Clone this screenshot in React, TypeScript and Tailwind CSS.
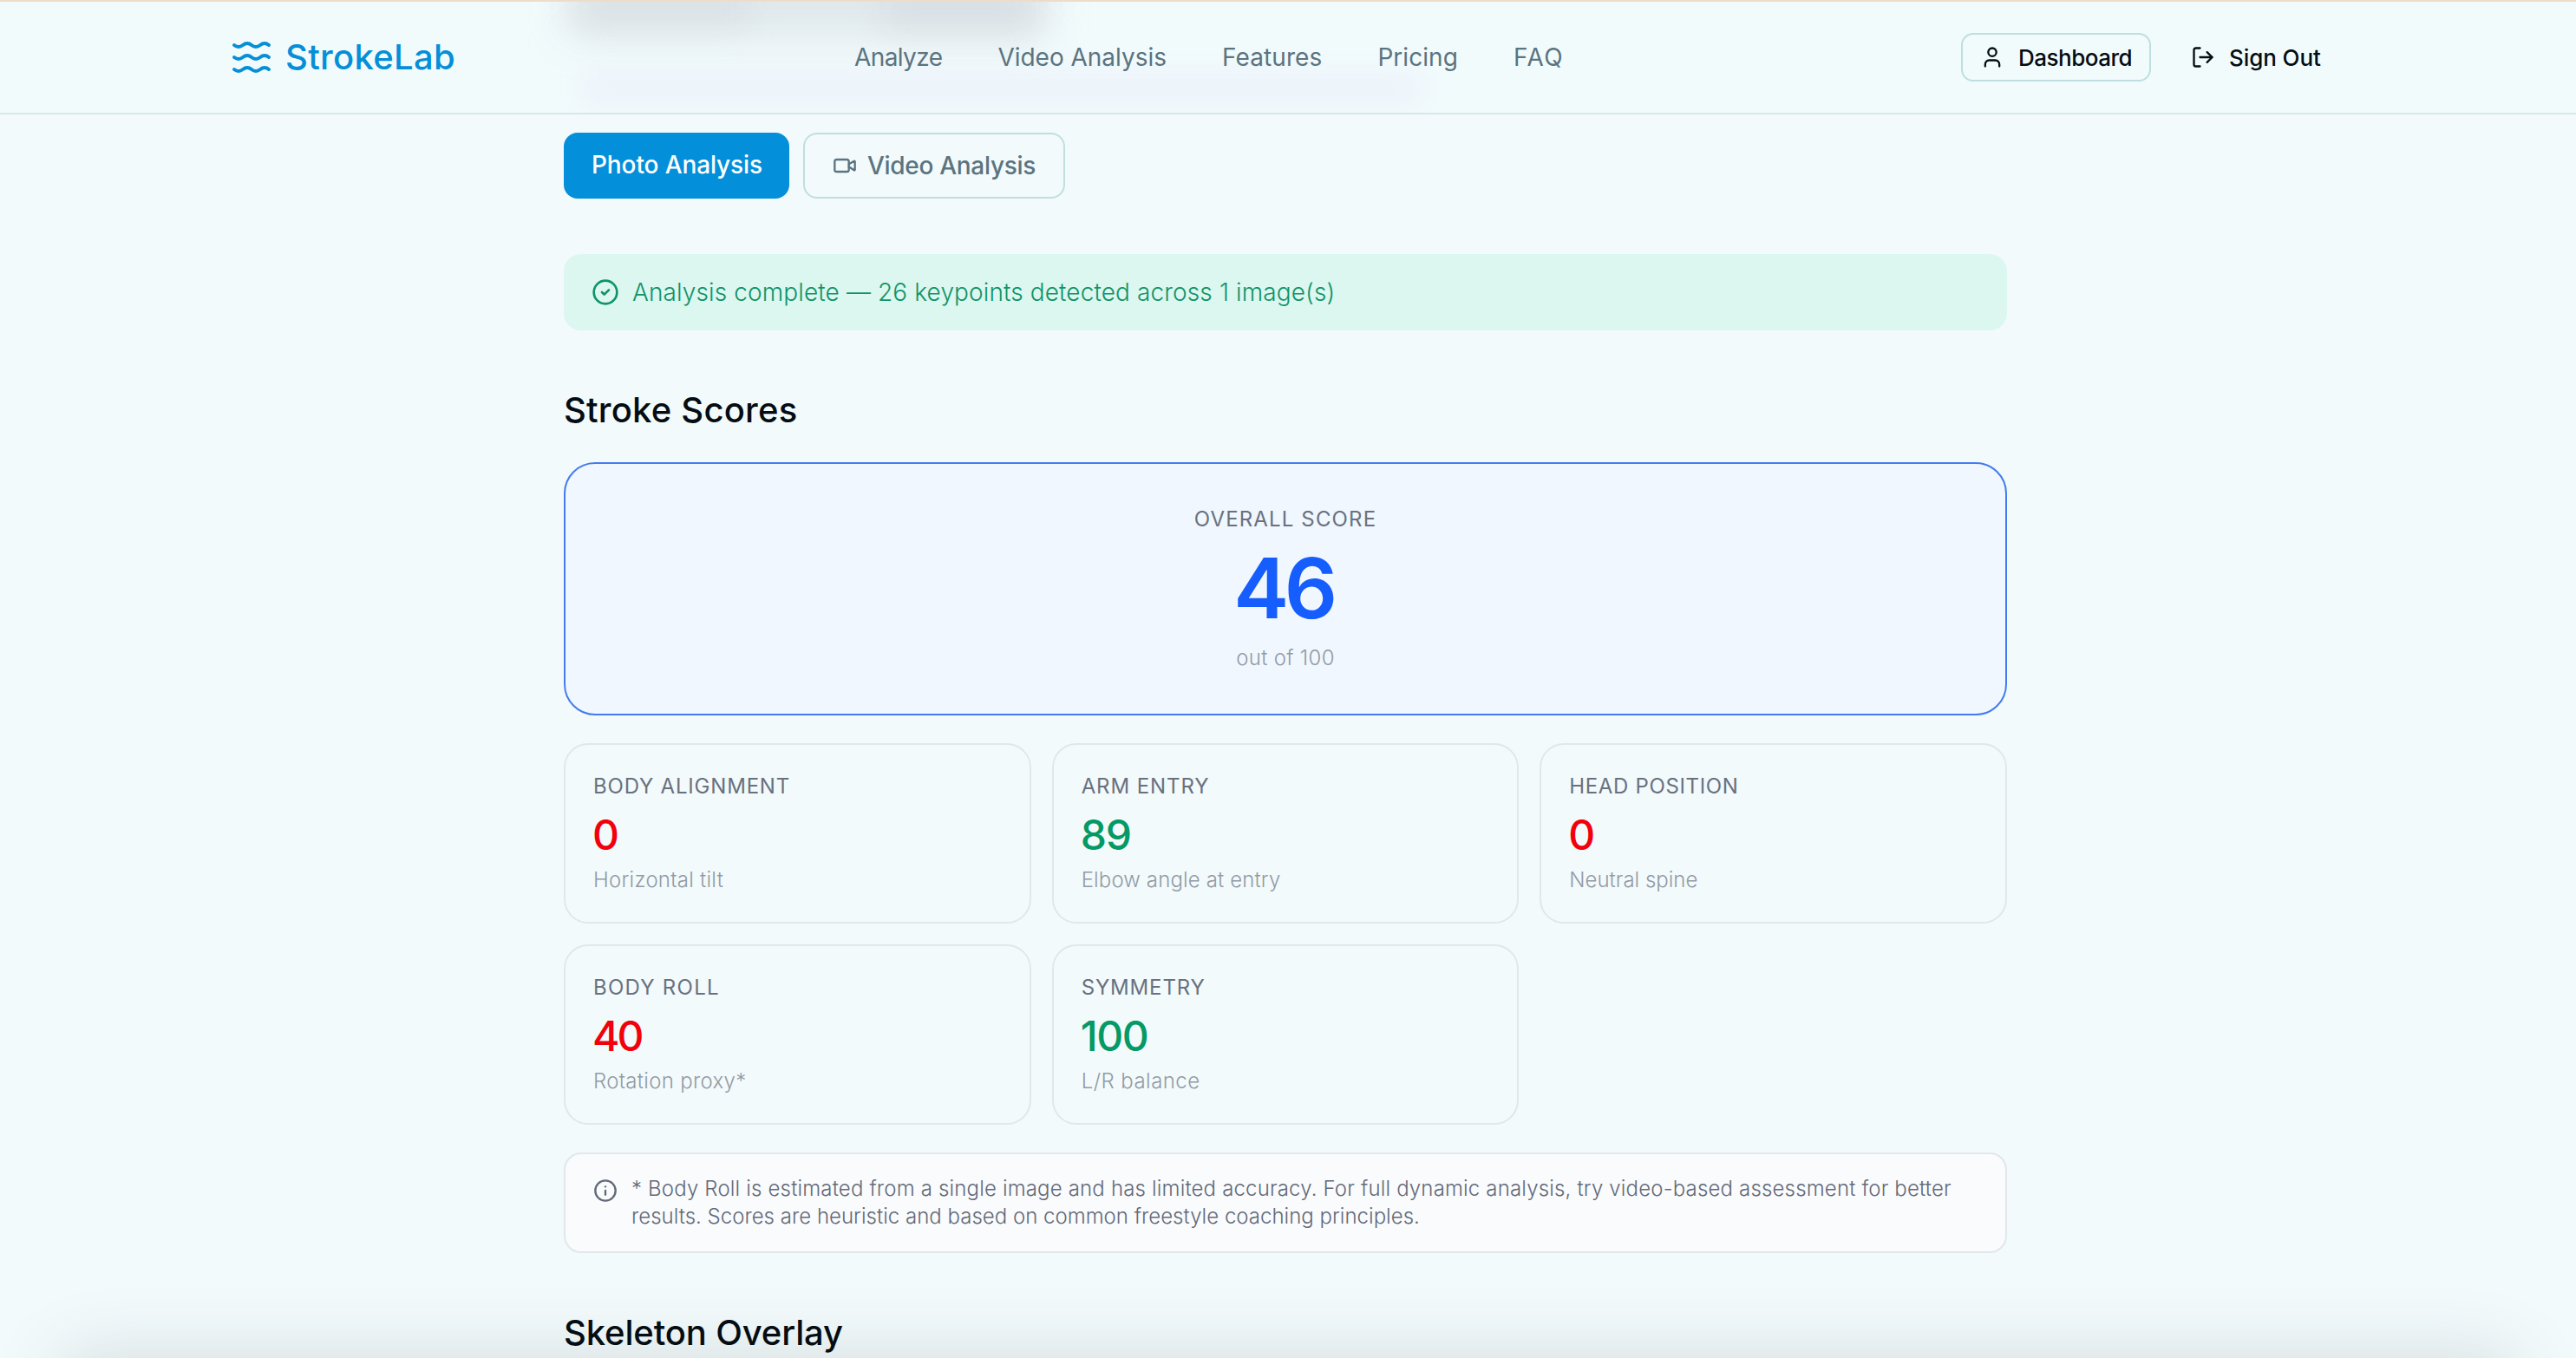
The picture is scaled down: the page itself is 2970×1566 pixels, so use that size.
import React from "react";
import { CircleCheck, Info, LogOut, User, Video } from "lucide-react";

function WavesLogo() {
  const wave = "M2 6c.6.5 1.2 1 2.5 1C7 7 7 5 9.5 5c2.6 0 2.4 2 5 2 2.5 0 2.5-2 5-2 1.3 0 1.9.5 2.5 1";
  return (
    <svg
      viewBox="0 0 24 24"
      className="size-12 shrink-0"
      fill="none"
      stroke="currentColor"
      strokeWidth="2"
      strokeLinecap="round"
      strokeLinejoin="round"
    >
      <path d={wave} transform="translate(0 -1)" />
      <path d={wave} transform="translate(0 6)" />
      <path d={wave} transform="translate(0 13)" />
    </svg>
  );
}

const navItems = [
  { label: "Analyze", tracking: "tracking-[-0.6px]" },
  { label: "Video Analysis", tracking: "tracking-[-0.02px]" },
  { label: "Features", tracking: "tracking-[0.1px]" },
  { label: "Pricing", tracking: "tracking-[0.05px]" },
  { label: "FAQ", tracking: "tracking-[1.5px]" },
];

function Header() {
  return (
    <header className="relative h-[132px] shrink-0 overflow-hidden border-t-2 border-b-2 border-t-[#eedcc9] border-b-[#d3e8e8] bg-[#f2fbfc]">
      <div className="absolute -top-[30px] left-[655px] h-[70px] w-[550px] bg-[#b9bfc6]/32 blur-[24px]" />
      <div className="absolute -top-[30px] left-[660px] h-[62px] w-[200px] bg-[#b9bfc6]/16 blur-[18px]" />
      <div className="absolute -top-[30px] left-[1020px] h-[66px] w-[180px] bg-[#b9bfc6]/20 blur-[18px]" />
      <div className="absolute top-[84px] left-[670px] h-[32px] w-[970px] bg-[#e6ecfa]/65 blur-[16px]" />
      <div className="relative flex h-full items-center pl-[266px]">
        <div className="flex w-[719px] items-center gap-[15px] text-[#058fd8]">
          <WavesLogo />
          <span className="text-[40px] font-medium tracking-[0.3px]">StrokeLab</span>
        </div>
        <nav className="flex w-[1276px] gap-16 text-[28px] font-normal text-[#5a7480]">
          {navItems.map((n) => (
            <a key={n.label} className={n.tracking}>
              {n.label}
            </a>
          ))}
        </nav>
        <button className="flex h-[56px] w-[219px] items-center gap-[16px] rounded-[14px] border-2 border-[#bddfe1] pl-5 text-[26px] font-medium tracking-[-0.5px] text-[#050d12]">
          <User className="size-7 shrink-0" strokeWidth={2} />
          Dashboard
        </button>
        <button className="ml-[46px] flex h-[56px] items-center gap-[16px] text-[26px] font-medium tracking-[-0.09px] text-[#050d12]">
          <LogOut className="size-7 shrink-0" strokeWidth={2} />
          Sign Out
        </button>
      </div>
    </header>
  );
}

type Score = {
  label: string;
  labelTracking: string;
  value: string;
  valueClass: string;
  note: string;
  noteTracking: string;
};

const scores: Score[] = [
  {
    label: "BODY ALIGNMENT",
    labelTracking: "tracking-[0.8px]",
    value: "0",
    valueClass: "text-[#f2000b]",
    note: "Horizontal tilt",
    noteTracking: "tracking-[0.25px]",
  },
  {
    label: "ARM ENTRY",
    labelTracking: "tracking-[0.9px]",
    value: "89",
    valueClass: "text-[#059966] tracking-[-1.2px]",
    note: "Elbow angle at entry",
    noteTracking: "tracking-[0.13px]",
  },
  {
    label: "HEAD POSITION",
    labelTracking: "tracking-[0.64px]",
    value: "0",
    valueClass: "text-[#f2000b]",
    note: "Neutral spine",
    noteTracking: "tracking-[0px]",
  },
  {
    label: "BODY ROLL",
    labelTracking: "tracking-[1.25px]",
    value: "40",
    valueClass: "text-[#f2000b] tracking-[-3px]",
    note: "Rotation proxy*",
    noteTracking: "tracking-[0.3px]",
  },
  {
    label: "SYMMETRY",
    labelTracking: "tracking-[0.85px]",
    value: "100",
    valueClass: "text-[#059966] tracking-[-1.45px]",
    note: "L/R balance",
    noteTracking: "tracking-[0.45px]",
  },
];

function ScoreCard({ score }: { score: Score }) {
  return (
    <div className="flex h-[208px] flex-col rounded-[28px] border-2 border-[#e0e8ea] pt-[32px] pl-[32px]">
      <span className={`text-[24px] leading-[32px] font-normal text-[#69717f] ${score.labelTracking}`}>
        {score.label}
      </span>
      <span className={`mt-[12px] -ml-px text-[48px] leading-[56px] font-medium ${score.valueClass}`}>
        {score.value}
      </span>
      <span className={`mt-[8px] text-[24px] leading-[32px] font-light text-[#929aa5] ${score.noteTracking}`}>
        {score.note}
      </span>
    </div>
  );
}

export default function App() {
  return (
    <div className="relative flex h-[1566px] w-[2970px] flex-col overflow-hidden bg-[#f2fafc] font-['Inter',sans-serif] whitespace-nowrap">
      <Header />
      <div className="pointer-events-none absolute -bottom-[90px] left-[80px] h-[80px] w-[2810px] rounded-[20px] shadow-[0_0_80px_16px_rgba(60,70,70,0.15)]" />
      <main className="relative ml-[650px] flex w-[1664px] flex-col pt-[21px]">
        <div className="flex gap-4">
          <button className="flex h-[76px] w-[260px] items-center rounded-[16px] bg-[#038fd9] pb-[3px] pl-[32px] text-[28px] font-medium tracking-[-0.11px] text-white">
            Photo Analysis
          </button>
          <button className="flex h-[76px] w-[302px] items-center gap-[12px] rounded-[16px] border-2 border-[#c1dfdd] pl-[32px] text-[28px] font-medium tracking-[-0.3px] text-[#5a7480]">
            <Video className="size-7 shrink-0" strokeWidth={2} />
            Video Analysis
          </button>
        </div>

        <div className="mt-[64px] flex h-[88px] items-center gap-[15px] rounded-[20px] bg-[#dcf6f0] pl-[32px] text-[#0f9467]">
          <CircleCheck className="size-8 shrink-0" strokeWidth={2} />
          <span className="text-[28px] font-light tracking-[0.12px]">
            Analysis complete — 26 keypoints detected across 1 image(s)
          </span>
        </div>

        <h2 className="mt-[68px] text-[40px] leading-[48px] font-medium tracking-[0.2px] text-[#050d12]">
          Stroke Scores
        </h2>

        <div className="mt-[36px] flex h-[292px] flex-col items-center rounded-[36px] border-2 border-[#437bf0] bg-[#f0f7fe] pt-[48px]">
          <span className="text-[24px] leading-[32px] font-normal tracking-[1.15px] text-[#69717f]">
            OVERALL SCORE
          </span>
          <span className="mt-[15px] pr-[5px] text-[96px] leading-[96px] font-semibold tracking-[-5.5px] text-[#155dfc]">
            46
          </span>
          <span className="mt-[17px] text-[24px] leading-[32px] font-light tracking-[0.3px] text-[#929aa5]">
            out of 100
          </span>
        </div>

        <div className="mt-8 grid grid-cols-3 gap-6">
          {scores.map((s) => (
            <ScoreCard key={s.label} score={s} />
          ))}
        </div>

        <div className="mt-8 flex h-[116px] gap-[16px] rounded-[20px] border-2 border-[#e2e7ea] bg-[#fafbfd] pt-[24px] pl-[32px] text-[#626a78]">
          <Info className="mt-[4px] size-7 shrink-0" strokeWidth={2} />
          <p className="text-[24px] leading-[32px] font-light">
            <span className="tracking-[0.165px]">
              * Body Roll is estimated from a single image and has limited accuracy. For full dynamic analysis, try
              video-based assessment for better
            </span>
            <br />
            <span className="tracking-[0.01px]">
              results. Scores are heuristic and based on common freestyle coaching principles.
            </span>
          </p>
        </div>

        <h2 className="mt-[68px] text-[40px] leading-[48px] font-medium tracking-[-0.14px] text-[#050d12]">
          Skeleton Overlay
        </h2>
      </main>
    </div>
  );
}
